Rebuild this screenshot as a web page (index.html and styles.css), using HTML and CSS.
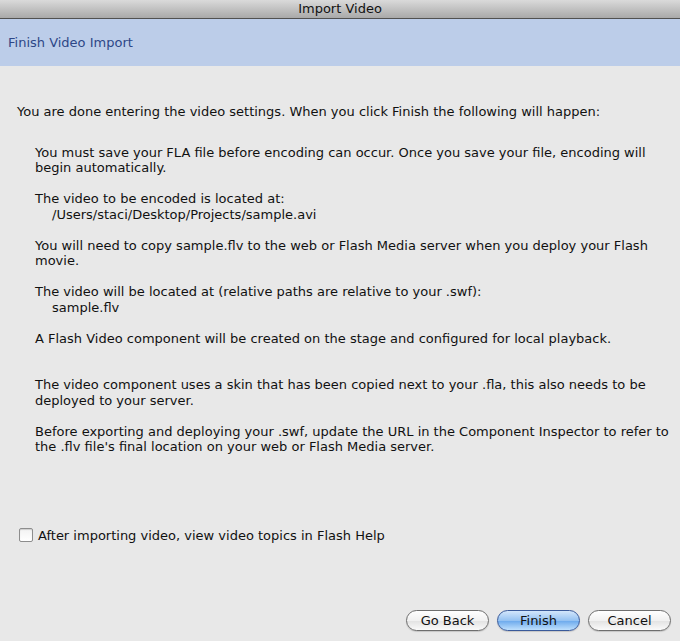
FILE: index.html
```html
<!DOCTYPE html>
<html lang="en">
<head>
    <meta charset="UTF-8">
    <title>Import Video</title>
    <link rel="stylesheet" href="styles.css">
</head>
<body>

    <div class="window">
        <div class="title-bar">Import Video</div>

        <div class="step-header">Finish Video Import</div>

        <div class="content">
            <p class="intro">You are done entering the video settings. When you click Finish the following will happen:</p>

            <div class="notes">
                <p>You must save your FLA file before encoding can occur. Once you save your file, encoding will begin automatically.</p>
                <p>The video to be encoded is located at:<br><span class="path">/Users/staci/Desktop/Projects/sample.avi</span></p>
                <p>You will need to copy sample.flv to the web or Flash Media server when you deploy your Flash movie.</p>
                <p>The video will be located at (relative paths are relative to your .swf):<br><span class="path">sample.flv</span></p>
                <p class="spaced">A Flash Video component will be created on the stage and configured for local playback.</p>
                <p>The video component uses a skin that has been copied next to your .fla, this also needs to be deployed to your server.</p>
                <p>Before exporting and deploying your .swf, update the URL in the Component Inspector to refer to the .flv file's final location on your web or Flash Media server.</p>
            </div>
        </div>

        <label class="help-option">
            <span class="checkbox"></span>
            After importing video, view video topics in Flash Help
        </label>

        <div class="buttons">
            <button class="btn">Go Back</button>
            <button class="btn btn-default">Finish</button>
            <button class="btn">Cancel</button>
        </div>
    </div>

</body>
</html>
```

FILE: styles.css
```css
:root {
    --bg-color: #e8e8e8;
    --header-color: #bccde9;
    --txt-color: #111;
}

body {
    margin: 0;
    padding: 0;
    background-color: var(--bg-color);
    font-family: 'DejaVu Sans', 'Lucida Grande', sans-serif;
    font-size: 13px;
    color: var(--txt-color);
}

.window {
    width: 680px;
    height: 641px;
    display: flex;
    flex-direction: column;
}

.title-bar {
    height: 18px;
    line-height: 18px;
    text-align: center;
    color: #111;
    background: linear-gradient(#dadada, #a9a9a9);
    border-bottom: 1px solid #515151;
}

.step-header {
    height: 47px;
    line-height: 47px;
    padding-left: 8px;
    background-color: var(--header-color);
    color: #2e4787;
}

.content {
    padding: 38px 10px 0 17px;
    flex: 1;
}

.content p {
    margin: 0;
    line-height: 15.5px;
}

.intro {
    margin-bottom: 25px !important;
}

.notes {
    padding-left: 18px;
    display: flex;
    flex-direction: column;
    gap: 15.5px;
}

.notes .spaced {
    margin-bottom: 15.5px;
}

.path {
    padding-left: 17px;
}

.help-option {
    display: flex;
    align-items: center;
    gap: 5px;
    padding-left: 19px;
    height: 16px;
    margin-bottom: 67px;
}

.checkbox {
    width: 12px;
    height: 12px;
    border: 1px solid #8d8d8d;
    border-radius: 2px;
    background: linear-gradient(#f2f2f2, #ffffff);
    box-shadow: inset 0 1px 1px rgba(0, 0, 0, 0.15);
}

.buttons {
    display: flex;
    justify-content: flex-end;
    gap: 8px;
    padding-right: 9px;
    margin-bottom: 10px;
}

.btn {
    width: 83px;
    height: 21px;
    padding: 0;
    border: 1px solid #6e6e6e;
    border-radius: 11px;
    background: linear-gradient(#ffffff 0%, #f1f1f1 50%, #e2e2e2 51%, #fafafa 100%);
    font-family: 'DejaVu Sans', 'Lucida Grande', sans-serif;
    font-size: 13px;
    color: #111;
    box-shadow: 0 1px 1px rgba(0, 0, 0, 0.15);
}

.btn-default {
    border-color: #3a5a9a;
    background: linear-gradient(#d3e6fb 0%, #95c2f2 50%, #6aa8ec 51%, #bfe0fd 100%);
}
```
